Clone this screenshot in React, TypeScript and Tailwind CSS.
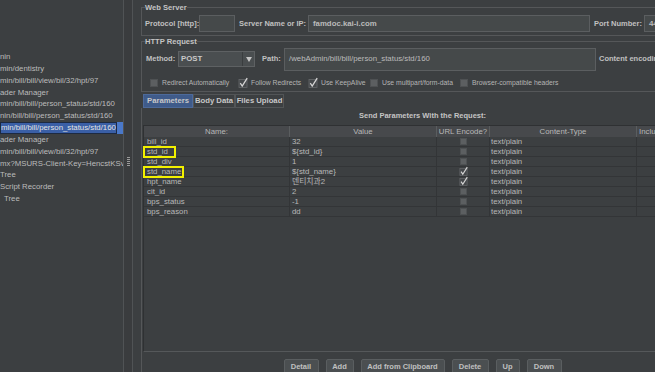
import React from "react";

const treeRows: { text: string; pl?: number; selected?: boolean }[] = [
  { text: "nResultsViewer", pl: 10 },
  { text: "" },
  { text: "" },
  { text: "" },
  { text: "" },
  { text: "nin" },
  { text: "min/dentistry" },
  { text: "min/bill/bill/view/bil/32/hpt/97" },
  { text: "ader Manager" },
  { text: "min/bill/bill/person_status/std/160" },
  { text: "nin/bill/bill/person_status/std/160" },
  { text: "min/bill/bill/person_status/std/160", selected: true },
  { text: "ader Manager" },
  { text: "min/bill/bill/view/bil/32/hpt/97" },
  { text: "mx?MSURS-Client-Key=HencstKSvlTdk" },
  { text: "Tree" },
  { text: "Script Recorder" },
  { text: " Tree", pl: 4 },
];

const params: { name: string; value: string; enc: boolean; box?: number }[] = [
  { name: "bill_id", value: "32", enc: false },
  { name: "std_id", value: "${std_id}", enc: false, box: 33 },
  { name: "std_div", value: "1", enc: false },
  { name: "std_name", value: "${std_name}", enc: true, box: 41 },
  { name: "hpt_name", value: "덴티치과2", enc: true },
  { name: "cit_id", value: "2", enc: false },
  { name: "bps_status", value: "-1", enc: false },
  { name: "bps_reason", value: "dd", enc: false },
];

function Check({ checked, size = 8 }: { checked: boolean; size?: number }) {
  if (!checked) {
    return <div className="shrink-0 bg-[#5c5f61] border border-[#4e5153]" style={{ width: size, height: size }} />;
  }
  return (
    <svg width={size + 2} height={size + 2} viewBox="0 0 10 10" className="shrink-0 overflow-visible">
      <rect x="1" y="1.5" width="8" height="8" fill="#44474a" stroke="#66696b" strokeWidth="0.8" />
      <path d="M2.3 5.2 L4.2 8 L9.2 0.2" fill="none" stroke="#d4d4d4" strokeWidth="1.3" />
    </svg>
  );
}

function Input({ w, h, text, cls = "" }: { w: string; h: string; text?: string; cls?: string }) {
  return (
    <div className={`${w} ${h} ${cls} shrink-0 bg-[#45494a] border border-[#5b5e60] flex items-center pl-[4px] text-[7.8px] text-[#bbbbbb] overflow-hidden whitespace-nowrap`}>
      {text}
    </div>
  );
}

export default function App() {
  return (
    <div className="w-[655px] h-[372px] overflow-hidden flex bg-[#3c3f41] text-[#bbbbbb] font-['Liberation_Sans','Noto_Sans_CJK_KR',sans-serif]">
      {/* Left tree */}
      <div className="w-[123px] shrink-0 overflow-hidden">
        <div className="mt-[-8px] flex flex-col">
          {treeRows.map((r, i) =>
            r.selected ? (
              <div key={i} className="h-[11.83px] flex bg-[#4a78c9]">
                <div className="w-[117px] h-full bg-[#3a5fa6] border border-[#1d2a42] text-[#e4e4e4] text-[7.8px] leading-[10px] whitespace-nowrap overflow-hidden">
                  {r.text}
                </div>
              </div>
            ) : (
              <div
                key={i}
                className="h-[11.83px] text-[7.8px] leading-[11.83px] whitespace-nowrap overflow-hidden"
                style={{ paddingLeft: r.pl ?? 0 }}
              >
                {r.text}
              </div>
            )
          )}
        </div>
      </div>

      {/* Splitter */}
      <div className="w-[18px] shrink-0 flex">
        <div className="w-[1px] bg-[#505355]" />
        <div className="w-[8px] bg-[#3a3c3e] flex flex-col items-center pt-[157px]">
          <div className="flex flex-col gap-[1px]">
            <div className="w-[3px] h-[1px] bg-[#9a9a9a]" />
            <div className="w-[3px] h-[1px] bg-[#9a9a9a]" />
            <div className="w-[3px] h-[1px] bg-[#9a9a9a]" />
            <div className="w-[3px] h-[1px] bg-[#9a9a9a]" />
            <div className="w-[3px] h-[1px] bg-[#9a9a9a]" />
          </div>
        </div>
        <div className="w-[1px] bg-[#505355]" />
        <div className="w-[8px]" />
      </div>

      {/* Main panel */}
      <div className="w-[562px] shrink-0 flex flex-col">
        <div className="h-[2px] bg-[#4b5a7a]" />

        {/* Web Server */}
        <fieldset className="mt-[2px] border border-[#555759] px-[3px] pb-[2px]">
          <legend className="text-[7.6px] font-bold leading-[11px] text-[#c4c4c4]">Web Server</legend>
          <div className="mt-[1px] h-[19px] flex items-center text-[7.5px] font-bold text-[#c0c0c0] whitespace-nowrap">
            <div className="w-[54px] shrink-0">Protocol [http]:</div>
            <Input w="w-[36px]" h="h-[17px]" />
            <div className="w-[69px] ml-[4px] shrink-0">Server Name or IP:</div>
            <Input w="w-[282px]" h="h-[17px]" text="famdoc.kai-i.com" />
            <div className="w-[50px] ml-[4px] shrink-0">Port Number:</div>
            <Input w="w-[40px]" h="h-[17px]" text="443" cls="pl-[2px]" />
          </div>
        </fieldset>

        {/* HTTP Request */}
        <fieldset className="border border-[#555759] px-[3px] pb-[2px]">
          <legend className="text-[7.6px] font-bold leading-[11px] text-[#c4c4c4]">HTTP Request</legend>
          <div className="h-[24px] flex items-center text-[7.5px] font-bold text-[#c0c0c0] whitespace-nowrap">
            <div className="w-[32px] ml-[1px] shrink-0">Method:</div>
            <div className="w-[77px] h-[16px] shrink-0 flex bg-[#4a4e50] border border-[#5e6163]">
              <div className="flex-1 flex items-center pl-[2px] text-[7.8px] font-bold text-[#c8c8c8]">POST</div>
              <div className="w-[12px] border-l border-[#3a3d3f] flex items-center justify-center">
                <svg width="6" height="5" viewBox="0 0 6 5">
                  <path d="M0 0 L6 0 L3 5 Z" fill="#c4c4c4" />
                </svg>
              </div>
            </div>
            <div className="w-[22px] ml-[7px] shrink-0">Path:</div>
            <Input w="w-[312px]" h="h-[23px]" text="/webAdmin/bill/bill/person_status/std/160" cls="font-normal" />
            <div className="ml-[3px] shrink-0">Content encoding:</div>
          </div>
          <div className="h-[12px] mt-[6px] flex items-center text-[6.8px] text-[#b4b4b4] whitespace-nowrap">
            <div className="w-[88px] ml-[5px] shrink-0 flex items-center gap-[4px]">
              <Check checked={false} />
              <span>Redirect Automatically</span>
            </div>
            <div className="w-[70px] shrink-0 flex items-center gap-[3px]">
              <Check checked={true} />
              <span>Follow Redirects</span>
            </div>
            <div className="w-[62px] shrink-0 flex items-center gap-[3px]">
              <Check checked={true} />
              <span>Use KeepAlive</span>
            </div>
            <div className="w-[90px] shrink-0 flex items-center gap-[4px]">
              <Check checked={false} />
              <span>Use multipart/form-data</span>
            </div>
            <div className="shrink-0 flex items-center gap-[4px]">
              <Check checked={false} />
              <span>Browser-compatible headers</span>
            </div>
          </div>
        </fieldset>

        {/* Tabs */}
        <div className="mt-[2px] ml-[2px] h-[14px] flex text-[7.7px] font-bold text-[#c8c8c8] whitespace-nowrap">
          <div className="w-[50px] bg-[#3f5b8a] border border-[#4d6a9a] flex items-center justify-center">Parameters</div>
          <div className="w-[42px] border border-[#525557] flex items-center justify-center">Body Data</div>
          <div className="w-[49px] border border-[#525557] flex items-center justify-center">Files Upload</div>
        </div>
        <div className="h-[2px] bg-[#3d5a8c]" />

        {/* Tab content */}
        <div className="flex-1 flex flex-col border-l border-[#555759]">
          <div className="mt-[3px] h-[10px] text-center text-[7.5px] font-bold leading-[10px] text-[#c4c4c4]">
            Send Parameters With the Request:
          </div>
          <div className="mt-[4px] ml-[1px] h-[227px] shrink-0 border-l border-b border-t border-[#2f3133] border-b-[#55585a] flex flex-col text-[7.8px]">
            <div className="h-[11px] grid grid-cols-[146px_147px_53px_147px_80px] bg-[#47494c] leading-[11px] text-[#b8b8b8]">
              <div className="text-center border-r border-[#5a5d5f]">Name:</div>
              <div className="text-center border-r border-[#5a5d5f]">Value</div>
              <div className="text-center border-r border-[#5a5d5f]">URL Encode?</div>
              <div className="text-center border-r border-[#5a5d5f]">Content-Type</div>
              <div className="pl-[2px] whitespace-nowrap">Include Equals?</div>
            </div>
            {params.map((p) => (
              <div key={p.name} className="h-[10px] grid grid-cols-[146px_147px_53px_147px_80px] border-b border-[#333537] leading-[9px] text-[#b8b8b8]">
                <div className="relative pl-[3px] border-r border-[#333537] whitespace-nowrap">
                  {p.name}
                  {p.box ? (
                    <span
                      className="absolute left-[-1px] top-[-1px] h-[12px] border-2 border-[#f2f000]"
                      style={{ width: p.box }}
                    />
                  ) : null}
                </div>
                <div className="pl-[2px] border-r border-[#333537] whitespace-nowrap">{p.value}</div>
                <div className="border-r border-[#333537] flex items-center justify-center">
                  <Check checked={p.enc} size={7} />
                </div>
                <div className="pl-[1px] border-r border-[#333537]">text/plain</div>
                <div />
              </div>
            ))}
          </div>

          {/* Buttons */}
          <div className="mt-[7px] flex justify-center gap-[7px] text-[7.5px] font-bold text-[#c0c0c0]">
            <div className="w-[35px] h-[16px] bg-[#4b4f51] border border-[#5a5e60] rounded-[2px] flex items-center justify-center">Detail</div>
            <div className="w-[28px] h-[16px] bg-[#4b4f51] border border-[#5a5e60] rounded-[2px] flex items-center justify-center">Add</div>
            <div className="w-[84px] h-[16px] bg-[#4b4f51] border border-[#5a5e60] rounded-[2px] flex items-center justify-center">Add from Clipboard</div>
            <div className="w-[37px] h-[16px] bg-[#4b4f51] border border-[#5a5e60] rounded-[2px] flex items-center justify-center">Delete</div>
            <div className="w-[24px] h-[16px] bg-[#4b4f51] border border-[#5a5e60] rounded-[2px] flex items-center justify-center">Up</div>
            <div className="w-[35px] h-[16px] bg-[#4b4f51] border border-[#5a5e60] rounded-[2px] flex items-center justify-center">Down</div>
          </div>
        </div>
      </div>
    </div>
  );
}
